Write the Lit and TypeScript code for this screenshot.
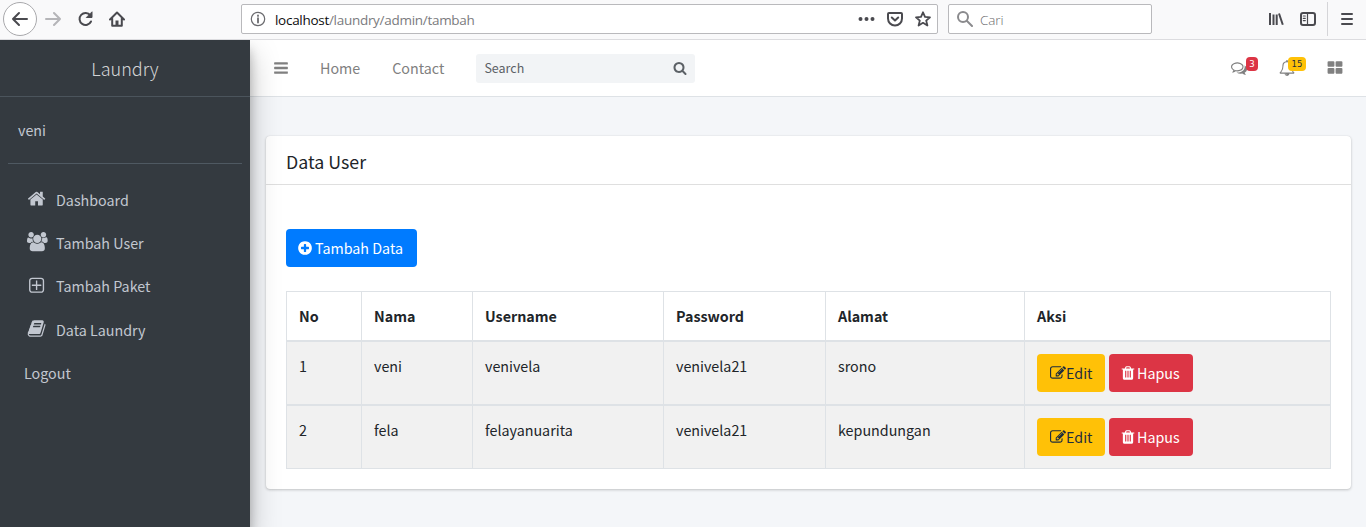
import { LitElement, html, css, svg } from "lit";
import { customElement, property } from "lit/decorators.js";

const paths: Record<string, string> = {
  home: "M1472 992v480q0 26-19 45t-45 19h-384v-384h-256v384h-384q-26 0-45-19t-19-45v-480q0-1 .5-3t.5-3l575-474 575 474q1 2 1 6zm223-69l-62 74q-8 9-21 11h-3q-13 0-21-7l-692-577-692 577q-12 8-24 7-13-2-21-11l-62-74q-8-10-7-23.5t11-21.5l719-599q32-26 76-26t76 26l244 204v-195q0-14 9-23t23-9h192q14 0 23 9t9 23v408l219 182q10 8 11 21.5t-7 23.5z",
  bars: "M1664 1344v128q0 26-19 45t-45 19h-1408q-26 0-45-19t-19-45v-128q0-26 19-45t45-19h1408q26 0 45 19t19 45zm0-512v128q0 26-19 45t-45 19h-1408q-26 0-45-19t-19-45v-128q0-26 19-45t45-19h1408q26 0 45 19t19 45zm0-512v128q0 26-19 45t-45 19h-1408q-26 0-45-19t-19-45v-128q0-26 19-45t45-19h1408q26 0 45 19t19 45z",
  search: "M1216 832q0-185-131.5-316.5t-316.5-131.5-316.5 131.5-131.5 316.5 131.5 316.5 316.5 131.5 316.5-131.5 131.5-316.5zm512 832q0 52-38 90t-90 38q-54 0-90-38l-343-342q-179 124-399 124-143 0-273.5-55.5t-225-150-150-225-55.5-273.5 55.5-273.5 150-225 225-150 273.5-55.5 273.5 55.5 225 150 150 225 55.5 273.5q0 220-124 399l343 343q37 37 37 90z",
  plusCircle: "M1344 960v-128q0-26-19-45t-45-19h-256v-256q0-26-19-45t-45-19h-128q-26 0-45 19t-19 45v256h-256q-26 0-45 19t-19 45v128q0 26 19 45t45 19h256v256q0 26 19 45t45 19h128q26 0 45-19t19-45v-256h256q26 0 45-19t19-45zm320-64q0 209-103 385.5t-279.5 279.5-385.5 103-385.5-103-279.5-279.5-103-385.5 103-385.5 279.5-279.5 385.5-103 385.5 103 279.5 279.5 103 385.5z",
  thLarge: "M832 1024v384q0 52-38 90t-90 38h-512q-52 0-90-38t-38-90v-384q0-52 38-90t90-38h512q52 0 90 38t38 90zm0-768v384q0 52-38 90t-90 38h-512q-52 0-90-38t-38-90v-384q0-52 38-90t90-38h512q52 0 90 38t38 90zm896 768v384q0 52-38 90t-90 38h-512q-52 0-90-38t-38-90v-384q0-52 38-90t90-38h512q52 0 90 38t38 90zm0-768v384q0 52-38 90t-90 38h-512q-52 0-90-38t-38-90v-384q0-52 38-90t90-38h512q52 0 90 38t38 90z",
  trash: "M704 1376v-704q0-14-9-23t-23-9h-64q-14 0-23 9t-9 23v704q0 14 9 23t23 9h64q14 0 23-9t9-23zm256 0v-704q0-14-9-23t-23-9h-64q-14 0-23 9t-9 23v704q0 14 9 23t23 9h64q14 0 23-9t9-23zm256 0v-704q0-14-9-23t-23-9h-64q-14 0-23 9t-9 23v704q0 14 9 23t23 9h64q14 0 23-9t9-23zm-544-992h448l-48-117q-7-9-17-11h-317q-10 2-17 11zm928 32v64q0 14-9 23t-23 9h-96v948q0 83-47 143.5t-113 60.5h-832q-66 0-113-58.5t-47-141.5v-952h-96q-14 0-23-9t-9-23v-64q0-14 9-23t23-9h309l70-167q15-37 54-63t79-26h320q40 0 79 26t54 63l70 167h309q14 0 23 9t9 23z",
  edit: "M888 1184l116-116-152-152-116 116v56h96v96h56zm440-720q-16-16-33 1l-350 350q-17 17-1 33t33-1l350-350q17-17 1-33zm80 594v190q0 119-84.5 203.5t-203.5 84.5h-832q-119 0-203.5-84.5t-84.5-203.5v-832q0-119 84.5-203.5t203.5-84.5h832q63 0 117 25 15 7 18 23 3 17-9 29l-49 49q-14 14-32 8-23-6-45-6h-832q-66 0-113 47t-47 113v832q0 66 47 113t113 47h832q66 0 113-47t47-113v-126q0-13 9-22l64-64q15-15 35-7t20 29zm-96-738l288 288-672 672h-288v-288zm444 132l-92 92-288-288 92-92q28-28 68-28t68 28l152 152q28 28 28 68t-28 68z",
  users: "M593 896q-162 5-265 128h-134q-82 0-138-40.5t-56-118.5q0-353 124-353 6 0 43.5 21t97.5 42.5 119 21.5q67 0 133-23-5 37-5 66 0 159 81 288zm1071 637q0 120-73 189.5t-194 69.5h-874q-121 0-194-69.5t-73-189.5q0-53 3.5-103.5t14-109 26.5-108.5 43-97.5 62-81 85.5-53.5 111.5-20q10 0 43 21.5t73 48 107 48 135 21.5 135-21.5 107-48 73-48 43-21.5q61 0 111.5 20t85.5 53.5 62 81 43 97.5 26.5 108.5 14 109 3.5 103.5zm-1024-1277q0 106-75 181t-181 75-181-75-75-181 75-181 181-75 181 75 75 181zm704 384q0 159-112.5 271.5t-271.5 112.5-271.5-112.5-112.5-271.5 112.5-271.5 271.5-112.5 271.5 112.5 112.5 271.5zm576 225q0 78-56 118.5t-138 40.5h-134q-103-123-265-128 93-129 93-288 0-29-5-66 66 23 133 23 59 0 119-21.5t97.5-42.5 43.5-21q124 0 124 353zm-128-609q0 106-75 181t-181 75-181-75-75-181 75-181 181-75 181 75 75 181z",
  plusSquare: "M1344 832v64q0 14-9 23t-23 9h-352v352q0 14-9 23t-23 9h-64q-14 0-23-9t-9-23v-352h-352q-14 0-23-9t-9-23v-64q0-14 9-23t23-9h352v-352q0-14 9-23t23-9h64q14 0 23 9t9 23v352h352q14 0 23 9t9 23zm128 448v-832q0-66-47-113t-113-47h-832q-66 0-113 47t-47 113v832q0 66 47 113t113 47h832q66 0 113-47t47-113zm128-832v832q0 119-84.5 203.5t-203.5 84.5h-832q-119 0-203.5-84.5t-84.5-203.5v-832q0-119 84.5-203.5t203.5-84.5h832q119 0 203.5 84.5t84.5 203.5z",
  book: "M1703 478q40 57 18 129l-275 906q-19 64-76.5 107.5t-122.5 43.5h-923q-77 0-148.5-53.5t-99.5-131.5q-24-67-2-127 0-4 3-27t4-37q1-8-3-21.5t-3-19.5q2-11 8-21t16.5-23.5 16.5-23.5q23-38 45-91.5t30-91.5q3-10 .5-30t-.5-28q3-11 17-28t17-23q21-36 42-92t25-90q1-9-2.5-32t.5-28q4-13 22-30.5t22-22.5q19-26 42.5-84.5t27.5-96.5q1-8-3-25.5t-2-26.5q2-8 9-18t18-23 17-21q8-12 16.5-30.5t15-35 16-36 19.5-32 26.5-23.5 36-11.5 47.5 5.5l-1 3q38-9 51-9h761q74 0 114 56t18 130l-274 906q-36 119-71.5 153.5t-128.5 34.5h-869q-27 0-38 15-11 16-1 43 24 70 144 70h923q29 0 56-15.5t35-41.5l300-987q7-22 5-57 38 15 59 43zm-1064 2q-4 13 2 22.5t20 9.5h608q13 0 25.5-9.5t16.5-22.5l21-64q4-13-2-22.5t-20-9.5h-608q-13 0-25.5 9.5t-16.5 22.5zm-83 256q-4 13 2 22.5t20 9.5h608q13 0 25.5-9.5t16.5-22.5l21-64q4-13-2-22.5t-20-9.5h-608q-13 0-25.5 9.5t-16.5 22.5z",
  comments: "M704 384q-153 0-286 52t-211.5 141-78.5 191q0 82 53 158t149 132l97 56-35 84q34-20 62-39l44-31 53 10q78 14 153 14 153 0 286-52t211.5-141 78.5-191-78.5-191-211.5-141-286-52zm0-128q191 0 353.5 68.5t256.5 186.5 94 257-94 257-256.5 186.5-353.5 68.5q-86 0-176-16-124 88-278 128-36 9-86 16h-3q-11 0-20.5-8t-11.5-21q-1-3-1-6.5t.5-6.5 2-6l2.5-5 3.5-5.5 4-5 4.5-5 4-4.5q5-6 23-25t26-29.5 22.5-29 25-38.5 20.5-44q-124-72-195-177t-71-224q0-139 94-257t256.5-186.5 353.5-68.5zm822 1169q10 24 20.5 44t25 38.5 22.5 29 26 29.5 23 25q1 1 4 4.5t4.5 5 4 5 3.5 5.500l2.500 5 2 6 .5 6.500-1 6.500q-3 14-13 22t-22 7q-50-7-86-16-154-40-278-128-90 16-176 16-271 0-472-132 58 4 88 4 161 0 309-45t264-129q125-92 192-212t67-254q0-77-23-152 129 71 204 178t75 230q0 120-71 224.500t-195 176.500z",
  bell: "M912 1696q0-16-16-16-59 0-101.5-42.5t-42.5-101.5q0-16-16-16t-16 16q0 73 51.5 124.5t124.5 51.5q16 0 16-16zm-666-288h1300q-266-300-266-832 0-51-24-105t-69-103-121.5-80.5-169.5-31.5-169.5 31.5-121.5 80.5-69 103-24 105q0 532-266 832zm1482 0q0 52-38 90t-90 38h-448q0 106-75 181t-181 75-181-75-75-181h-448q-52 0-90-38t-38-90q50-42 91-88t85-119.5 74.5-158.5 50-206 19.5-260q0-152 117-282.5t307-158.5q-8-19-8-39 0-40 28-68t68-28 68 28 28 68q0 20-8 39 190 28 307 158.5t117 282.5q0 139 19.5 260t50 206 74.5 158.5 85 119.5 91 88z",
};

@customElement("fa-icon")
class FaIcon extends LitElement {
  @property() name = "home";
  @property({ type: Number }) size = 16;
  static styles = css`
    :host { display: inline-flex; flex: none; }
    .glyph { display: block; fill: currentColor; overflow: visible; }
  `;
  render() {
    const wide = this.name === "users";
    const w = wide ? 1920 : 1792;
    return html`<svg class="glyph" width=${(this.size * w) / 1792} height=${this.size} viewBox="0 0 ${w} 1792">
      ${svg`<path d=${paths[this.name]}></path>`}
    </svg>`;
  }
}

@customElement("browser-bar")
class BrowserBar extends LitElement {
  static styles = css`
    :host {
      display: flex; align-items: center; box-sizing: border-box; height: 40px;
      background: #f9f9fa; border-bottom: 1px solid #dcdcdf; padding-bottom: 1px;
      font-family: "Open Sans", "Noto Sans", sans-serif; font-size: 13.5px; color: #0c0c0d;
    }
    svg { display: block; flex: none; fill: none; stroke: #4a4a4f; stroke-width: 2; stroke-linecap: round; stroke-linejoin: round; }
    .back { width: 32px; height: 32px; margin-left: 3px; border: 1px solid #a9a9ac; border-radius: 50%; background: #fff; display: grid; place-items: center; }
    .forward { margin-left: 8px; }
    .forward svg { stroke: #b5b5b8; }
    .reload { margin-left: 16px; }
    .homepage { margin-left: 15px; }
    .box { box-sizing: border-box; height: 30px; border: 1px solid #b9b9bc; border-radius: 2px; background: #fff; display: flex; align-items: center; }
    .address { width: 697px; margin-left: 116px; padding: 0 6px 0 8px; }
    .info { margin-right: 9px; }
    .info svg { stroke: #6a6a6e; stroke-width: 1.2; }
    .url { flex: 1; line-height: 20px; padding-top: 2px; color: #7b7b7e; letter-spacing: -0.29px; white-space: nowrap; }
    .host { color: #0c0c0d; }
    .tools { display: flex; align-items: center; gap: 12px; }
    .find { width: 204px; margin-left: 10px; padding-left: 8px; gap: 7px; color: #6b6b6e; }
    .find svg { stroke: #8a8a8d; }
    .hint { line-height: 20px; padding-top: 2px; font-weight: 300; letter-spacing: -0.1px; }
    .right { display: flex; align-items: center; margin-left: auto; height: 38px; }
    .library { margin-right: 16px; }
    .divider { width: 1px; height: 34px; background: #d5d5d8; margin: 0 12px 0 11px; }
    .menu { margin-right: 12px; }
  `;
  render() {
    return html`
      <div class="back"><svg width="18" height="16" viewBox="0 0 18 16"><path d="M16 8H2M8 2L2 8l6 6"/></svg></div>
      <div class="forward"><svg width="16" height="16" viewBox="0 0 16 16"><path d="M1 8h14M9 2l6 6-6 6"/></svg></div>
      <div class="reload"><svg width="17" height="16" viewBox="0 0 17 16"><path d="M13.3 4.3A6 6 0 1 0 14 10.5"/><path d="M15 1.2V6.5H9.7z" fill="#4a4a4f" stroke-width="1"/></svg></div>
      <div class="homepage"><svg width="16" height="16" viewBox="0 0 16 16"><path d="M1 8.5L8 1.5l7 7M3.2 7.5V14.8h9.6V7.5"/><path d="M8 14V9.5" stroke-width="3" stroke-linecap="butt"/></svg></div>
      <div class="box address">
        <div class="info"><svg width="16" height="16" viewBox="0 0 16 16"><circle cx="8" cy="8" r="6.7"/><path d="M8 7.2V11.5M8 4.5v.4" stroke-width="1.8"/></svg></div>
        <div class="url"><span class="host">localhost</span>/laundry/admin/tambah</div>
        <div class="tools">
          <svg width="17" height="16" viewBox="0 0 17 16"><path d="M2.5 8h.01M8.5 8h.01M14.5 8h.01" stroke-width="4"/></svg>
          <svg width="16" height="16" viewBox="0 0 16 16"><path d="M2 2h12q1 0 1 1v4.500a7 7 0 0 1-14 0V3q0-1 1-1zM4.800 6.500L8 9.500l3.200-3"/></svg>
          <svg width="16" height="16" viewBox="0 0 16 16"><path d="M8 1.300l2 4.600 5 .4-3.800 3.300 1.200 4.900L8 11.800l-4.400 2.700 1.200-4.900L1 6.300l5-.4z" stroke-width="1.800"/></svg>
        </div>
      </div>
      <div class="box find">
        <svg width="16" height="16" viewBox="0 0 16 16"><circle cx="6" cy="6" r="5"/><path d="M10 10l5 5"/></svg>
        <span class="hint">Cari</span>
      </div>
      <div class="right">
        <svg class="library" width="16" height="16" viewBox="0 0 16 16"><path d="M2 2v12M5.500 3.500V14M8.700 3.500V14M11 2.500l3.800 11.300" stroke-linecap="butt"/></svg>
        <svg width="16" height="16" viewBox="0 0 16 16"><rect x="1" y="2" width="14" height="12" rx="2"/><path d="M7.500 2v12M3.300 5h2M3.300 7.300h2M3.300 9.600h2" stroke-width="1.200"/></svg>
        <div class="divider"></div>
        <svg class="menu" width="14" height="16" viewBox="0 0 14 16"><path d="M2 3h10M2 8h10M2 13h10"/></svg>
      </div>
    `;
  }
}

@customElement("side-bar")
class SideBar extends LitElement {
  static styles = css`
    :host {
      display: flex; flex-direction: column; box-sizing: border-box; width: 250px; background: #343a40; color: #c2c7d0;
      box-shadow: 0 14px 28px rgba(0,0,0,.25), 0 10px 10px rgba(0,0,0,.22); z-index: 2;
      line-height: 24px;
    }
    .brand { box-sizing: border-box; height: 57px; padding-top: 16px; text-align: center; font-size: 18px; font-weight: 300; color: rgba(255,255,255,.8); border-bottom: 1px solid #4b545c; }
    .user { box-sizing: border-box; height: 67px; margin: 0 8px; padding: 21px 10px 0; border-bottom: 1px solid #4f5962; }
    .menu { display: flex; flex-direction: column; padding: 14px 8px 0; }
    .item { display: flex; align-items: center; height: 43.3px; padding-left: 16px; }
    .icon { width: 26px; margin-right: 6px; margin-top: -2px; display: flex; justify-content: center; }
  `;
  items = [["home", "Dashboard"], ["users", "Tambah User"], ["plusSquare", "Tambah Paket"], ["book", "Data Laundry"], ["", "Logout"]];
  render() {
    return html`
      <div class="brand">Laundry</div>
      <div class="user">veni</div>
      <div class="menu">
        ${this.items.map(([icon, label]) => html`<div class="item">
          ${icon ? html`<span class="icon"><fa-icon name=${icon} size="19.2"></fa-icon></span>` : ""}<span>${label}</span>
        </div>`)}
      </div>
    `;
  }
}

@customElement("top-nav")
class TopNav extends LitElement {
  static styles = css`
    :host { display: flex; align-items: center; box-sizing: border-box; height: 57px; background: #fff; border-bottom: 1px solid #dee2e6; color: #808080; padding: 0 23px 0 23px; line-height: 24px; }
    .link { margin-left: 32px; }
    .first { margin-left: 31px; }
    .search { display: flex; align-items: center; justify-content: space-between; box-sizing: border-box; width: 219px; height: 29px; margin-left: 32px; padding: 0 8px; background: #f2f4f6; border-radius: 3px; font-size: 12.5px; color: #5c6166; }
    .right { display: flex; align-items: center; margin-left: auto; }
    .alert { position: relative; display: flex; margin-right: 32px; }
    .badge { position: absolute; top: -3px; box-sizing: border-box; height: 14px; border-radius: 4px; text-align: center; font: 8.5px/14px "DejaVu Sans", sans-serif; }
    .red { left: 15px; width: 12px; background: #dc3545; color: #fff; }
    .yellow { left: 9px; width: 18px; background: #ffc107; color: #1f2d3d; }
  `;
  render() {
    return html`
      <fa-icon name="bars"></fa-icon>
      <span class="link first">Home</span><span class="link">Contact</span>
      <div class="search"><span>Search</span><fa-icon name="search" size="14"></fa-icon></div>
      <div class="right">
        <span class="alert"><fa-icon name="comments"></fa-icon><span class="badge red">3</span></span>
        <span class="alert"><fa-icon name="bell"></fa-icon><span class="badge yellow">15</span></span>
        <fa-icon name="thLarge"></fa-icon>
      </div>
    `;
  }
}

@customElement("user-card")
class UserCard extends LitElement {
  static styles = css`
    :host { display: block; box-sizing: border-box; width: 1085px; height: 353px; background: #fff; border-radius: 4px; box-shadow: 0 0 1px rgba(0,0,0,.125), 0 1px 3px rgba(0,0,0,.2); color: #212529; line-height: 24px; }
    .title { box-sizing: border-box; height: 49px; padding: 13px 20px 0; font-size: 17.8px; border-bottom: 1px solid #dfdfdf; }
    .body { padding: 44px 20px 0; }
    .btn { display: inline-flex; align-items: center; box-sizing: border-box; height: 38px; padding: 0 13px; border-radius: 4px; color: #fff; white-space: nowrap; }
    .add { width: 131px; background: #007bff; padding-left: 11px; gap: 2px; }
    .edit { width: 68px; background: #ffc107; color: #1f2d3d; }
    .delete { width: 84px; background: #dc3545; padding-left: 11px; gap: 1px; }
    .grid { display: grid; grid-template-columns: 75px 111px 191px 162px 199px 306px; grid-template-rows: 50px 64px 63px; margin-top: 24px; border: solid #dee2e6; border-width: 1px 0 0 1px; }
    .cell { padding: 12px 11px 0 12px; border: solid #dee2e6; border-width: 0 1px 2px 0; background: #f1f1f1; }
    .head { background: #fff; font-weight: 700; padding-top: 12px; }
    .last { border-bottom-width: 1px; }
    .actions { display: flex; gap: 4px; padding-left: 12px; }
  `;
  heads = ["No", "Nama", "Username", "Password", "Alamat", "Aksi"];
  rows = [["1", "veni", "venivela", "venivela21", "srono"], ["2", "fela", "felayanuarita", "venivela21", "kepundungan"]];
  render() {
    return html`
      <div class="title">Data User</div>
      <div class="body">
        <div class="btn add"><fa-icon name="plusCircle"></fa-icon><span>Tambah Data</span></div>
        <div class="grid">
          ${this.heads.map((h) => html`<div class="cell head">${h}</div>`)}
          ${this.rows.map((r, i) => {
            const last = i === this.rows.length - 1 ? "last" : "";
            return html`${r.map((c) => html`<div class="cell ${last}">${c}</div>`)}
              <div class="cell actions ${last}">
                <div class="btn edit"><fa-icon name="edit"></fa-icon><span>Edit</span></div>
                <div class="btn delete"><fa-icon name="trash"></fa-icon><span>Hapus</span></div>
              </div>`;
          })}
        </div>
      </div>
    `;
  }
}

@customElement("app-root")
class AppRoot extends LitElement {
  static styles = css`
    :host { display: flex; flex-direction: column; width: 1366px; height: 527px; overflow: hidden; font-family: "Noto Sans CJK JP", "Noto Sans CJK SC", sans-serif; font-size: 14.3px; }
    .shell { display: flex; flex: 1; min-height: 0; overflow: hidden; }
    .main { flex: 1; background: #f4f6f9; }
    .content { padding: 39px 0 0 16px; }
  `;
  render() {
    return html`
      <browser-bar></browser-bar>
      <div class="shell">
        <side-bar></side-bar>
        <div class="main">
          <top-nav></top-nav>
          <div class="content"><user-card></user-card></div>
        </div>
      </div>
    `;
  }
}
